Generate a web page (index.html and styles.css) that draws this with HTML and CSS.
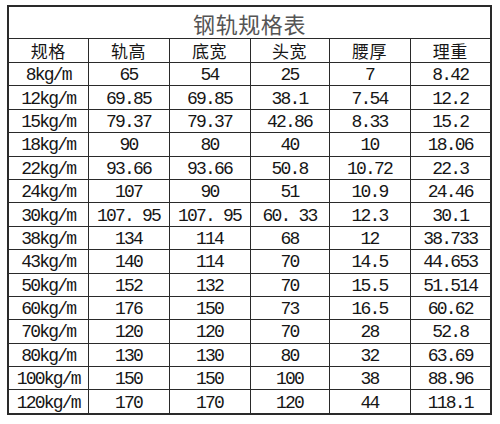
FILE: index.html
```html
<!DOCTYPE html>
<html lang="zh">
<head>
<meta charset="utf-8">
<title>钢轨规格表</title>
<link rel="stylesheet" href="styles.css">
</head>
<body>
<table class="spec">
  <colgroup>
    <col class="c1"><col class="c2"><col class="c3"><col class="c4"><col class="c5"><col class="c6">
  </colgroup>
  <tr class="title-row"><td colspan="6" class="title">钢轨规格表</td></tr>
  <tr class="head-row"><th>规格</th><th>轨高</th><th>底宽</th><th>头宽</th><th>腰厚</th><th>理重</th></tr>
  <tr><td>8kg/m</td><td>65</td><td>54</td><td>25</td><td>7</td><td>8.42</td></tr>
  <tr><td>12kg/m</td><td>69.85</td><td>69.85</td><td>38.1</td><td>7.54</td><td>12.2</td></tr>
  <tr><td>15kg/m</td><td>79.37</td><td>79.37</td><td>42.86</td><td>8.33</td><td>15.2</td></tr>
  <tr><td>18kg/m</td><td>90</td><td>80</td><td>40</td><td>10</td><td>18.06</td></tr>
  <tr><td>22kg/m</td><td>93.66</td><td>93.66</td><td>50.8</td><td>10.72</td><td>22.3</td></tr>
  <tr><td>24kg/m</td><td>107</td><td>90</td><td>51</td><td>10.9</td><td>24.46</td></tr>
  <tr><td>30kg/m</td><td>107.&nbsp;95</td><td>107.&nbsp;95</td><td>60.&nbsp;33</td><td>12.3</td><td>30.1</td></tr>
  <tr><td>38kg/m</td><td>134</td><td>114</td><td>68</td><td>12</td><td>38.733</td></tr>
  <tr><td>43kg/m</td><td>140</td><td>114</td><td>70</td><td>14.5</td><td>44.653</td></tr>
  <tr><td>50kg/m</td><td>152</td><td>132</td><td>70</td><td>15.5</td><td>51.514</td></tr>
  <tr><td>60kg/m</td><td>176</td><td>150</td><td>73</td><td>16.5</td><td>60.62</td></tr>
  <tr><td>70kg/m</td><td>120</td><td>120</td><td>70</td><td>28</td><td>52.8</td></tr>
  <tr><td>80kg/m</td><td>130</td><td>130</td><td>80</td><td>32</td><td>63.69</td></tr>
  <tr><td>100kg/m</td><td>150</td><td>150</td><td>100</td><td>38</td><td>88.96</td></tr>
  <tr><td>120kg/m</td><td>170</td><td>170</td><td>120</td><td>44</td><td>118.1</td></tr>
</table>
</body>
</html>
```

FILE: styles.css
```css
html, body {
  margin: 0;
  padding: 0;
  background: #ffffff;
}

body {
  padding: 5px 0 0 7px;
}

.spec {
  border-collapse: collapse;
  table-layout: fixed;
  width: 483px;
  border: 2px solid #2a2a2a;
  color: #161616;
}

.c1 { width: 80px; }
.c2 { width: 81px; }
.c3 { width: 81px; }
.c4 { width: 79px; }
.c5 { width: 81px; }
.c6 { width: 81px; }

.spec td,
.spec th {
  border: 1px solid #2a2a2a;
  padding: 2px 0 0;
  text-align: center;
  vertical-align: middle;
  font-family: "Liberation Mono", "Noto Sans CJK SC", monospace;
  font-size: 18px;
  letter-spacing: -1.8px;
  font-weight: normal;
  height: 20.4px;
  line-height: 20px;
  white-space: nowrap;
}

.spec .head-row th {
  font-family: "Noto Sans CJK SC", sans-serif;
  font-size: 17px;
  letter-spacing: 0.5px;
  padding: 0;
  height: 23px;
  line-height: 22px;
}

.spec .title {
  font-family: "Noto Sans CJK SC", sans-serif;
  font-size: 22px;
  letter-spacing: 0.6px;
  color: #555555;
  padding: 0;
  height: 31px;
  line-height: 28px;
}
```
